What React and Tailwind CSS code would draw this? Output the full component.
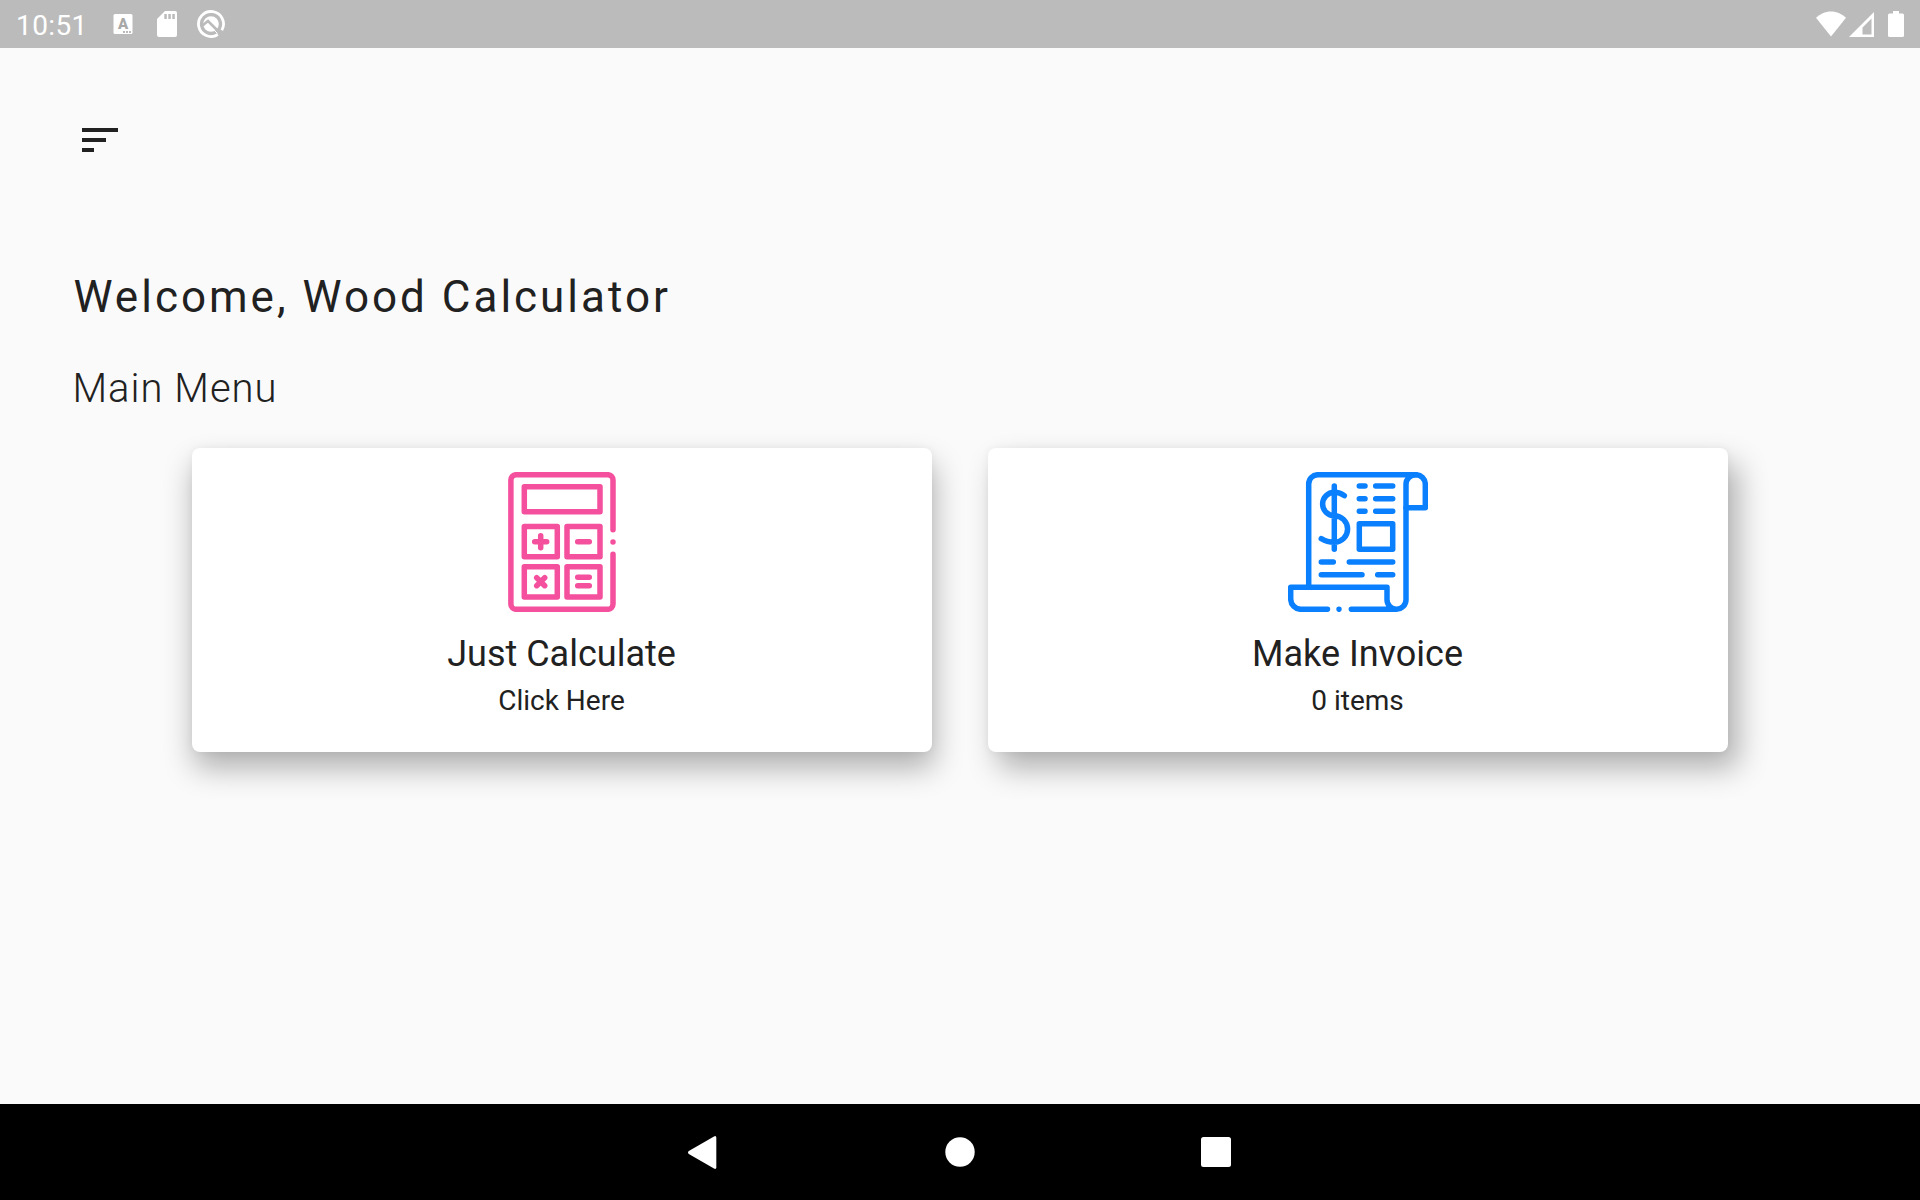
import React from 'react';

const StatusBar = () => {
  return (
    <header className="flex h-12 items-center justify-between bg-[#bbbbbb] pl-4 pr-4 text-white">
      <div className="flex items-center">
        <span className="w-[97px] pt-[3px] text-[28px] leading-8 tracking-[0.4px]">10:51</span>
        <svg className="mr-6 h-5 w-5" viewBox="0 0 20 20">
          <rect x="0.5" y="0" width="19" height="20" rx="1.5" fill="currentColor" />
          <text x="10" y="15" textAnchor="middle" fontSize="15" fontWeight="900" fill="#a8a8a8">A</text>
          <path d="M10 17h2v2h-2zM13 17h2v2h-2zM16 17h2v2h-2z" fill="#bbbbbb" />
        </svg>
        <svg className="mr-5 h-[26px] w-5" viewBox="0 0 20 26">
          <path d="M8 0h10a2 2 0 0 1 2 2v22a2 2 0 0 1-2 2H2a2 2 0 0 1-2-2V8z" fill="currentColor" />
          <path d="M7.3 3h2.5v5H7.3zM11.3 3h2.5v5h-2.5zM15.3 3h2.5v5h-2.5z" fill="#bbbbbb" />
        </svg>
        <svg className="h-7 w-7" viewBox="0 0 28 28" fill="none">
          <path d="M20.8 24.500A12.500 12.500 0 1 1 24.800 20.300" stroke="currentColor" strokeWidth="2.8" />
          <circle cx="14" cy="14" r="7.8" fill="currentColor" />
          <path d="M5.500 15.500L11 11l12.500 12.500" stroke="#bbbbbb" strokeWidth="2.6" />
          <path d="M11 14l9.500 9.500" stroke="currentColor" strokeWidth="1" />
        </svg>
      </div>
      <div className="flex items-center">
        <svg className="mr-[3px] h-[26px] w-[30px]" viewBox="0 0 30 26" fill="currentColor">
          <path d="M15 25.500L0 6.800C4 3 9 .5 15 .5s11 2.500 15 6.300z" />
        </svg>
        <svg className="mr-3.5 h-[26px] w-[25px]" viewBox="0 0 25 26">
          <path fillRule="evenodd" d="M0 26L25 1v25zM13.500 23.500h9V7.500l-9 9z" fill="currentColor" />
        </svg>
        <svg className="h-[26px] w-4" viewBox="0 0 16 26" fill="currentColor">
          <path d="M5 0h6v2.500h3.500A1.500 1.500 0 0 1 16 4v20.500a1.500 1.500 0 0 1-1.500 1.500h-13A1.500 1.500 0 0 1 0 24.500V4a1.500 1.500 0 0 1 1.500-1.500H5z" />
        </svg>
      </div>
    </header>
  );
};

const CalculatorIcon = () => (
  <svg
    className="size-[140px] text-[#f4509d]"
    viewBox="0 0 140 140"
    fill="none"
    stroke="currentColor"
    strokeWidth="5.5"
    strokeLinecap="round"
    strokeLinejoin="round"
  >
    <path d="M121 57.700V8a5.300 5.300 0 0 0-5.300-5.300H24.200A5.300 5.300 0 0 0 18.900 8v124a5.300 5.300 0 0 0 5.300 5.300h91.500A5.300 5.300 0 0 0 121 132V82.300M121 70v0" />
    <path d="M32.300 14.700H108v25H32.300z" />
    <path d="M32.300 54.500h33v30.200h-33zM75 54.500h33v30.200H75z" />
    <path d="M32.300 94.700h33v30.200h-33zM75 94.700h33v30.200H75z" />
    <path d="M42.700 69.700h12M48.700 63.700v12M85.700 69.700h11.600" />
    <path d="M44.700 105.700l8 8M52.700 105.700l-8 8M85.700 105.300h11.600M85.700 113.700h11.600" />
  </svg>
);

const InvoiceIcon = () => (
  <svg
    className="size-[140px] text-[#0b80ff]"
    viewBox="0 0 140 140"
    fill="none"
    stroke="currentColor"
    strokeWidth="5.5"
    strokeLinecap="round"
    strokeLinejoin="round"
  >
    <path d="M20.700 115.300V12a9.300 9.300 0 0 1 9.300-9.300h97.700a9.600 9.600 0 0 1 9.600 9.600v23.400H118" />
    <path d="M127.700 2.700a9.700 9.700 0 0 0-9.700 9.700v115.300a9.500 9.500 0 0 1-19 0v-12.400H2.700V127A10.300 10.300 0 0 0 13 137.300h26.500M51 137.300v0M63.300 137.300h45.200" />
    <path d="M71.300 14H77M87.700 14h17M71.300 26.700H77M87.700 26.700h17M71.300 39.300H77M87.700 39.300h17" />
    <path d="M71.300 51.700h33.400v25.600H71.300z" />
    <path d="M33.300 90h12M61.300 90h43.400M33.300 102.700H74M89.700 102.700h15" />
    <path d="M46.300 14v63.300M56.300 23.700C53.500 21.500 50 20.300 46.300 20.300a11.700 11.700 0 0 0 0 23.400a13.300 13.300 0 0 1 0 26.600C41 70.300 37 69 33.300 66.700" />
  </svg>
);

const MenuCard = ({ icon, title, subtitle, shadow }) => {
  return (
    <button className={`flex h-[304px] flex-1 flex-col items-center rounded-lg bg-white pt-6 ${shadow}`}>
      {icon}
      <span className="mr-px mt-[21px] text-4xl leading-[42px]">{title}</span>
      <span className="mr-px mt-[9px] text-[28px] leading-[33px]">{subtitle}</span>
    </button>
  );
};

const NavBar = () => {
  return (
    <nav className="flex h-24 items-center justify-center gap-[226px] bg-black text-white">
      <svg className="-ml-px mr-px h-[33px] w-[30px]" viewBox="0 0 30 33" fill="currentColor">
        <path d="M.8 15L26 .4Q28.300-.6 28.300 1.800v29.400q0 2.400-2.300 1.400L.8 18q-1.600-1.500 0-3z" />
      </svg>
      <svg className="size-[30px]" viewBox="0 0 30 30" fill="currentColor">
        <circle cx="15" cy="15" r="14.700" />
      </svg>
      <svg className="size-[30px]" viewBox="0 0 30 30" fill="currentColor">
        <rect width="30" height="30" rx="2.500" />
      </svg>
    </nav>
  );
};

const App = () => {
  const cards = [
    {
      title: 'Just Calculate',
      subtitle: 'Click Here',
      icon: <CalculatorIcon />,
      shadow: 'shadow-[2px_16px_30px_rgba(0,0,0,0.3),0_0_8px_rgba(0,0,0,0.05)]',
    },
    {
      title: 'Make Invoice',
      subtitle: '0 items',
      icon: <InvoiceIcon />,
      shadow: 'shadow-[10px_16px_30px_rgba(0,0,0,0.3),0_0_8px_rgba(0,0,0,0.05)]',
    },
  ];

  return (
    <div className="flex h-[1200px] w-[1920px] flex-col overflow-hidden bg-[#fafafa] font-['Roboto',sans-serif] text-[#212121]">
      <StatusBar />
      <main className="flex flex-1 flex-col pt-[68px]">
        <button className="ml-[76px] size-12">
          <svg viewBox="0 0 24 24" fill="currentColor">
            <path d="M3 6h18v2H3zM3 11h12v2H3zM3 16h6v2H3z" />
          </svg>
        </button>
        <h1 className="ml-[73.5px] mt-[107px] text-[44px] leading-[52px] tracking-[3px]">Welcome, Wood Calculator</h1>
        <h2 className="ml-[72.5px] mt-[42px] text-[40px] font-light leading-[48px] tracking-[1px]">Main Menu</h2>
        <div className="mt-[35px] flex gap-14 px-48">
          {cards.map((card, index) => (
            <MenuCard key={index} {...card} />
          ))}
        </div>
      </main>
      <NavBar />
    </div>
  );
};

export default App;
